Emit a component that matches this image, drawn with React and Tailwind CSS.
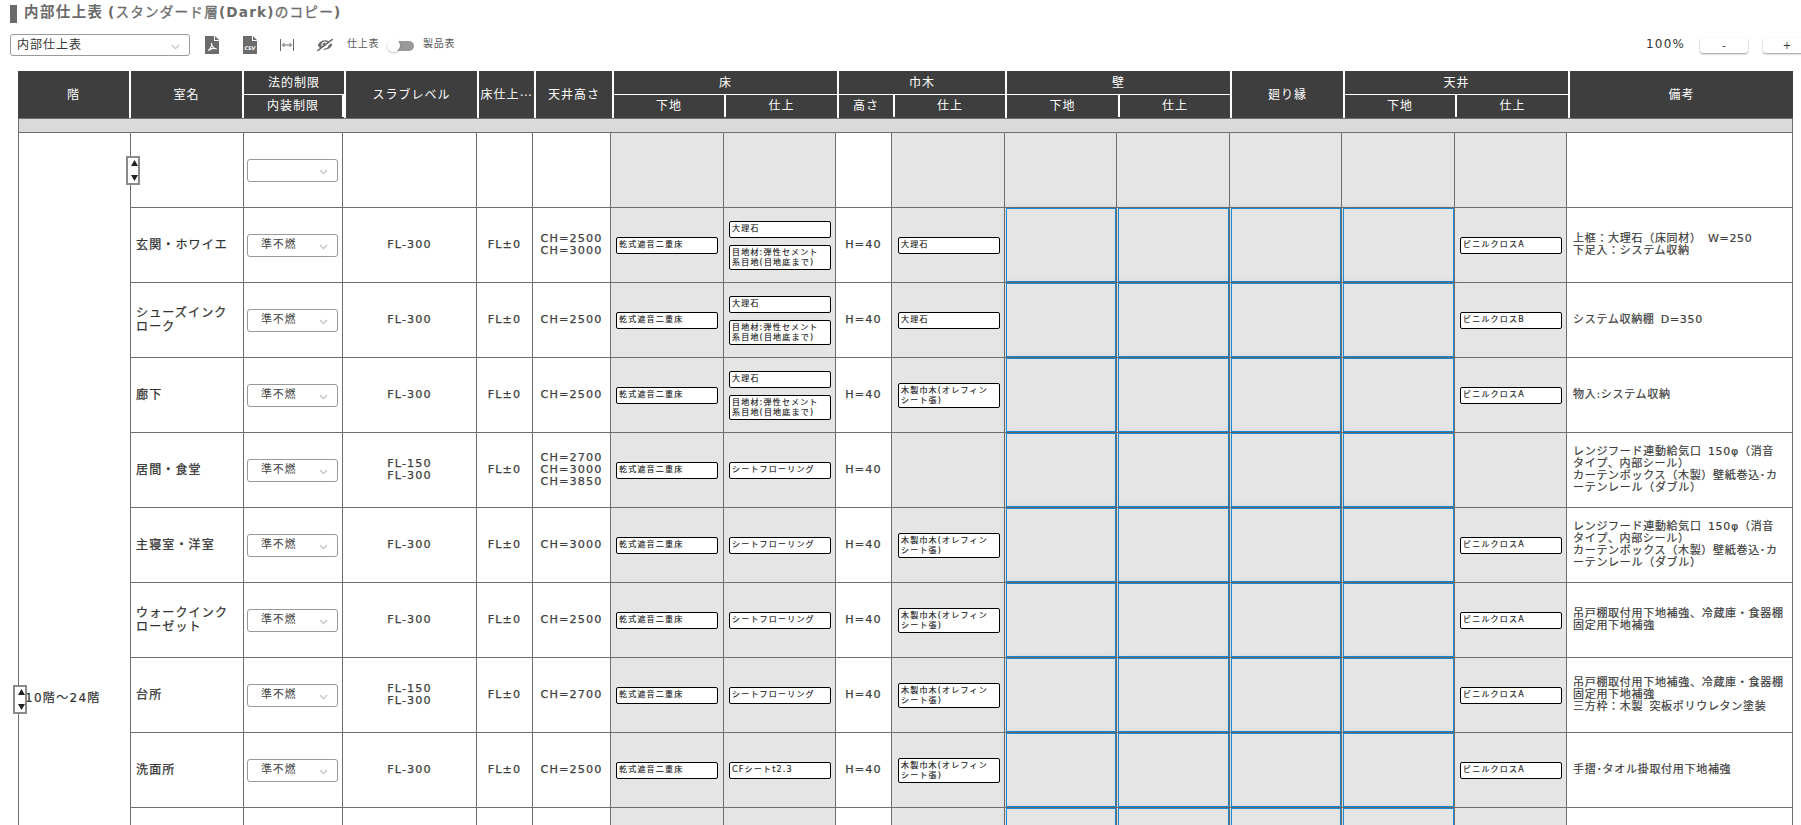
import React, { useState } from 'react';
import { FaEyeSlash } from 'react-icons/fa';

const RC = '乾式遮音二重床';
const JOINT = '目地材:弾性セメント\n系目地(目地底まで)';
const WOOD = '木製巾木(オレフィン\nシート張)';
const FLOORING = 'シートフローリング';
const KITCHEN_VENT = 'レンジフード連動給気口 150φ（消音\nタイプ、内部シール）\nカーテンボックス（木製）壁紙巻込･カ\nーテンレール（ダブル）';

const rows = [
    { id: 0, name: '', limit: '' },
    { id: 1, name: '玄関・ホワイエ', limit: '準不燃', slab: 'FL-300', fl: 'FL±0', ch: 'CH=2500\nCH=3000', base: RC, floor: ['大理石', JOINT], h: 'H=40', skirting: '大理石', ceiling: 'ビニルクロスA', note: '上框：大理石（床同材） W=250\n下足入：システム収納' },
    { id: 2, name: 'シューズインク\nローク', limit: '準不燃', slab: 'FL-300', fl: 'FL±0', ch: 'CH=2500', base: RC, floor: ['大理石', JOINT], h: 'H=40', skirting: '大理石', ceiling: 'ビニルクロスB', note: 'システム収納棚 D=350' },
    { id: 3, name: '廊下', limit: '準不燃', slab: 'FL-300', fl: 'FL±0', ch: 'CH=2500', base: RC, floor: ['大理石', JOINT], h: 'H=40', skirting: WOOD, ceiling: 'ビニルクロスA', note: '物入:システム収納' },
    { id: 4, name: '居間・食堂', limit: '準不燃', slab: 'FL-150\nFL-300', fl: 'FL±0', ch: 'CH=2700\nCH=3000\nCH=3850', base: RC, floor: [FLOORING], h: 'H=40', skirting: '', ceiling: '', note: KITCHEN_VENT },
    { id: 5, name: '主寝室・洋室', limit: '準不燃', slab: 'FL-300', fl: 'FL±0', ch: 'CH=3000', base: RC, floor: [FLOORING], h: 'H=40', skirting: WOOD, ceiling: 'ビニルクロスA', note: KITCHEN_VENT },
    { id: 6, name: 'ウォークインク\nローゼット', limit: '準不燃', slab: 'FL-300', fl: 'FL±0', ch: 'CH=2500', base: RC, floor: [FLOORING], h: 'H=40', skirting: WOOD, ceiling: 'ビニルクロスA', note: '吊戸棚取付用下地補強、冷蔵庫・食器棚\n固定用下地補強' },
    { id: 7, name: '台所', limit: '準不燃', slab: 'FL-150\nFL-300', fl: 'FL±0', ch: 'CH=2700', base: RC, floor: [FLOORING], h: 'H=40', skirting: WOOD, ceiling: 'ビニルクロスA', note: '吊戸棚取付用下地補強、冷蔵庫・食器棚\n固定用下地補強\n三方枠：木製 突板ポリウレタン塗装' },
    { id: 8, name: '洗面所', limit: '準不燃', slab: 'FL-300', fl: 'FL±0', ch: 'CH=2500', base: RC, floor: ['CFシートt2.3'], h: 'H=40', skirting: WOOD, ceiling: 'ビニルクロスA', note: '手摺･タオル掛取付用下地補強' },
    { id: 9, name: '', limit: null },
];

const Chevron = ({ className = '' }) => (
    <svg viewBox="0 0 10 6" className={`w-[9px] h-[6px] shrink-0 ${className}`} fill="none" stroke="#c4c4c4" strokeWidth="1.5">
        <path d="M1 0.8 L5 4.8 L9 0.8" />
    </svg>
);

const Head = ({ label, className }) => (
    <div className={`shrink-0 flex items-center justify-center bg-[#3e3e3e] border-r-2 border-white overflow-hidden whitespace-nowrap ${className}`}>
        {label}
    </div>
);

const HeadGroup = ({ label, className, children }) => (
    <div className={`shrink-0 flex flex-col border-r-2 border-white bg-[#3e3e3e] ${className}`}>
        <div className="h-[23px] flex items-center justify-center">{label}</div>
        <div className="h-6 flex border-t border-white pb-px">{children}</div>
    </div>
);

const SubHead = ({ label, className }) => (
    <div className={`flex items-center justify-center ${className}`}>{label}</div>
);

const Cell = ({ className = '', children }) => (
    <div className={`min-w-0 border-l border-b border-[#6f6f6f] flex ${className}`}>{children}</div>
);

const TextCell = ({ text }) => (
    <Cell className="items-center justify-center bg-white text-center whitespace-pre text-[11.2px] leading-[12px] tracking-[1.1px] text-[#3e3e3e] [-webkit-text-stroke:0.25px_#3e3e3e]">
        {text}
    </Cell>
);

const Chip = ({ text }) => (
    <div className={`w-[102px] shrink-0 border border-black rounded-[2px] bg-white pl-[2px] whitespace-pre text-[8px] tracking-[1.2px] text-[#222] [-webkit-text-stroke:0.15px_#222] ${text.includes('\n') ? 'h-[25px] pt-[2px] leading-[10px]' : 'h-[17px] leading-[14px]'}`}>
        {text}
    </div>
);

const ChipCell = ({ items }) => (
    <Cell className="flex-col items-start justify-center gap-[7px] bg-[#e5e5e5] pl-[5px] pt-px">
        {items.filter(Boolean).map((text) => <Chip key={text} text={text} />)}
    </Cell>
);

const SelectedCell = ({ selected }) => (
    <Cell className="bg-[#e5e5e5] pl-px">
        {selected && <div className="flex-1 border border-[#1a88d2] shadow-[0_0_8px_rgba(0,0,0,0.1)]"></div>}
    </Cell>
);

const RowHandle = ({ className }) => (
    <div className={`absolute z-10 w-[14px] h-[29px] bg-white border-2 border-[#8a8a8a] ${className}`}>
        <svg viewBox="0 0 10 25" className="w-[10px] h-[25px]" fill="#222">
            <path d="M3 8 L6.5 2 L10 8 Z M3 17 L10 17 L6.5 23 Z" />
        </svg>
    </div>
);

const FinishRow = ({ row, first }) => {
    const selected = row.id > 0;

    return (
        <>
            <Cell className="relative items-center bg-white pl-[5px] whitespace-pre text-[12px] leading-[14px] tracking-[1.15px] text-[#333] [-webkit-text-stroke:0.25px_#333]">
                {first && <RowHandle className="left-[-5px] top-[23px]" />}
                {row.name}
            </Cell>
            <Cell className="items-center bg-white pl-[3px] pt-px">
                {row.limit !== null && (
                    <button className="w-[91px] h-[23px] flex items-center justify-between border border-[#9a9a9a] rounded-[3px] pl-[13px] pr-[9px] text-[11px] tracking-[0.7px] text-[#444]">
                        <span>{row.limit}</span>
                        <Chevron className="mt-[3px]" />
                    </button>
                )}
            </Cell>
            <TextCell text={row.slab} />
            <TextCell text={row.fl} />
            <TextCell text={row.ch} />
            <ChipCell items={[row.base]} />
            <ChipCell items={row.floor || []} />
            <TextCell text={row.h} />
            <Cell className="items-center bg-[#e5e5e5] pl-[6px] pt-px">
                {row.skirting && <Chip text={row.skirting} />}
            </Cell>
            <SelectedCell selected={selected} />
            <SelectedCell selected={selected} />
            <SelectedCell selected={selected} />
            <SelectedCell selected={selected} />
            <ChipCell items={[row.ceiling]} />
            <Cell className="items-center border-r bg-white pl-[6px] whitespace-pre text-[11px] leading-[12px] tracking-[0.7px] [word-spacing:2px] text-[#3e3e3e] [-webkit-text-stroke:0.2px_#3e3e3e]">
                {row.note}
            </Cell>
        </>
    );
};

const App = () => {
    const [productView, setProductView] = useState(false);

    return (
        <div className="w-[1801px] h-[825px] overflow-hidden bg-white font-['DejaVu_Sans','Noto_Sans_CJK_JP',sans-serif]">
            <div className="h-7 flex items-start pl-[10px] pt-[5px]">
                <div className="w-[7px] h-[18px] bg-[#6b6b6b]"></div>
                <h1 className="ml-[7px] mt-[-3px] text-[14.5px] leading-[20px] font-bold tracking-[1.4px] text-[#6b6b6b] whitespace-nowrap">
                    内部仕上表 <span className="text-[13.6px] tracking-[1.2px] -ml-[2px]">(<span className="font-normal [-webkit-text-stroke:0.3px_#6b6b6b]">スタンダード層</span>(Dark)<span className="font-normal [-webkit-text-stroke:0.3px_#6b6b6b]">のコピー</span>)</span>
                </h1>
            </div>

            <div className="h-[43px] flex items-start pt-[6px]">
                <div className="w-[1646px] shrink-0 flex items-start pl-[10px] whitespace-nowrap">
                    <button className="w-[180px] h-[22px] flex items-center justify-between border border-[#9a9a9a] rounded-[3px] pl-[6px] pr-[9px] text-[12px] tracking-[1px] text-[#333]">
                        <span>内部仕上表</span>
                        <Chevron className="mt-[3px]" />
                    </button>
                    <svg viewBox="0 0 14 18" className="w-[14px] h-[18px] ml-[15px] mt-[2px]">
                        <path d="M0 0 H9 V5 H14 V18 H0 Z M10 0 L14 4 H10 Z" fill="#6b6b6b" />
                        <path d="M3.2 14.6 C5 13 7.2 9.5 6.4 7 M6.6 8 C7 10.5 9 12.6 11.6 12.8 C9 12 5.8 12.4 3.2 14.6" fill="none" stroke="#fff" strokeWidth="1.2" />
                    </svg>
                    <svg viewBox="0 0 14 18" className="w-[14px] h-[18px] ml-6 mt-[2px]">
                        <path d="M0 0 H9 V5 H14 V18 H0 Z M10 0 L14 4 H10 Z" fill="#6b6b6b" />
                        <text x="7" y="13.5" textAnchor="middle" fontSize="5" fontWeight="bold" fontStyle="italic" fill="#fff">CSV</text>
                    </svg>
                    <svg viewBox="0 0 14 12" className="w-[14px] h-3 ml-[23px] mt-[5px]" fill="none" stroke="#6b6b6b">
                        <path d="M0.5 0 V12 M13.5 0 V12 M2.5 6 H11.5 M4.5 4 L2.5 6 L4.5 8 M9.5 4 L11.5 6 L9.5 8" />
                    </svg>
                    <FaEyeSlash className="w-4 h-[14px] ml-[23px] mt-1 text-[#6b6b6b] -scale-x-100" />
                    <span className="w-8 ml-[14px] mt-[2px] text-[10px] leading-[15px] tracking-[0.8px] text-[#555]">仕上表</span>
                    <button className="flex items-center ml-2 mt-[5px]" onClick={() => setProductView(!productView)}>
                        <span className="w-[13px] h-[13px] rounded-full bg-white shadow-[0_1px_2px_rgba(0,0,0,0.25)] z-10"></span>
                        <span className="w-[17px] h-[10px] -ml-[3px] rounded-r-full bg-[#999]"></span>
                    </button>
                    <span className="ml-[9px] mt-[2px] text-[10px] leading-[15px] tracking-[0.8px] text-[#555]">製品表</span>
                </div>
                <span className="w-[54px] shrink-0 mt-px text-[12px] tracking-[1.2px] text-[#333]">100%</span>
                <button className="w-12 h-[15px] mt-1 shrink-0 rounded-[3px] bg-white text-[10px] leading-[15px] text-[#333] shadow-[0_1px_2px_rgba(0,0,0,0.4)]">-</button>
                <button className="w-12 h-[15px] mt-1 ml-[15px] shrink-0 rounded-[3px] bg-white text-[10px] leading-[15px] text-[#333] shadow-[0_1px_2px_rgba(0,0,0,0.4)]">+</button>
            </div>

            <div className="ml-[18px] w-[1775px] h-[47px] flex text-[12px] leading-none tracking-[1px] text-white">
                <Head label="階" className="w-[113px]" />
                <Head label="室名" className="w-[113px]" />
                <HeadGroup label="法的制限" className="w-[102px]">
                    <SubHead label="内装制限" className="flex-1 border-r-2 border-white" />
                </HeadGroup>
                <Head label="スラブレベル" className="w-[133px]" />
                <Head label="床仕上⋯" className="w-[57px]" />
                <Head label="天井高さ" className="w-[78px]" />
                <HeadGroup label="床" className="w-[225px]">
                    <SubHead label="下地" className="w-[112px] border-r-2 border-white" />
                    <SubHead label="仕上" className="flex-1" />
                </HeadGroup>
                <HeadGroup label="巾木" className="w-[168px]">
                    <SubHead label="高さ" className="w-14 border-r-2 border-white" />
                    <SubHead label="仕上" className="flex-1" />
                </HeadGroup>
                <HeadGroup label="壁" className="w-[225px]">
                    <SubHead label="下地" className="w-[113px] border-r-2 border-white" />
                    <SubHead label="仕上" className="flex-1" />
                </HeadGroup>
                <Head label="廻り縁" className="w-[113px]" />
                <HeadGroup label="天井" className="w-[225px]">
                    <SubHead label="下地" className="w-[112px] border-r-2 border-white" />
                    <SubHead label="仕上" className="flex-1" />
                </HeadGroup>
                <div className="flex-1 flex items-center justify-center bg-[#3e3e3e]">備考</div>
            </div>

            <div className="ml-[18px] w-[1775px] h-[15px] border border-[#6f6f6f] bg-[#dadada]"></div>

            <div className="ml-[18px] w-[1775px] grid auto-rows-[75px] grid-cols-[112px_113px_99px_134px_56px_78px_113px_112px_56px_113px_112px_113px_112px_113px_112px_227px]">
                <div className="relative row-span-10 border-l border-[#6f6f6f] pl-[6px] pt-[556px] text-[12px] leading-[18px] tracking-[1.3px] text-[#333] [-webkit-text-stroke:0.2px_#333]">
                    <RowHandle className="left-[-6px] top-[552px]" />
                    10階～24階
                </div>
                {rows.map((row, i) => <FinishRow key={row.id} row={row} first={i === 0} />)}
            </div>
        </div>
    );
};

export default App;
